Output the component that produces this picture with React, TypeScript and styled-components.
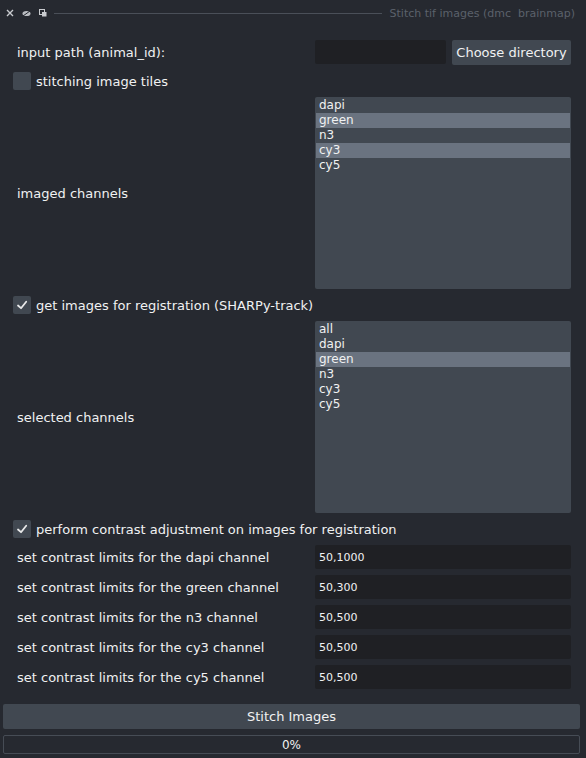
import styled, { createGlobalStyle } from "styled-components";

const GlobalStyle = createGlobalStyle`
  html, body {
    margin: 0;
    padding: 0;
    background: #262930;
  }
  * {
    box-sizing: border-box;
  }
`;

const imagedChannels = ["dapi", "green", "n3", "cy3", "cy5"];
const imagedSelected = ["green", "cy3"];
const selectedChannels = ["all", "dapi", "green", "n3", "cy3", "cy5"];
const selectedPicked = ["green"];

const contrastRows = [
  { channel: "dapi", value: "50,1000" },
  { channel: "green", value: "50,300" },
  { channel: "n3", value: "50,500" },
  { channel: "cy3", value: "50,500" },
  { channel: "cy5", value: "50,500" },
];

const CheckMark = () => (
  <svg width="12" height="12" viewBox="0 0 12 12">
    <polyline points="2,6.5 5,9.2 10.2,2.8" fill="none" stroke="#e8e9ea" strokeWidth="1.8" strokeLinecap="round" strokeLinejoin="round" />
  </svg>
);

const CheckRow = ({ checked, label }: { checked: boolean; label: string }) => (
  <CheckLine>
    <Box>{checked && <CheckMark />}</Box>
    <CheckText>{label}</CheckText>
  </CheckLine>
);

const ListBox = ({ items, selected }: { items: string[]; selected: string[] }) => (
  <List>
    {items.map((item) => (
      <ListItem key={item} $selected={selected.includes(item)}>
        {item}
      </ListItem>
    ))}
  </List>
);

const App = () => {
  return (
    <Page>
      <GlobalStyle />
      <TitleBar>
        <TitleIcons>
          <svg width="8" height="8" viewBox="0 0 8 8">
            <path d="M1 1 L7 7 M7 1 L1 7" stroke="#c9cbcf" strokeWidth="1.4" />
          </svg>
          <svg width="9" height="7" viewBox="0 0 9 7">
            <ellipse cx="4.5" cy="3.5" rx="4" ry="2.6" fill="#b9bcc1" />
            <path d="M1 6 L8 1" stroke="#262930" strokeWidth="1" />
          </svg>
          <svg width="8" height="8" viewBox="0 0 8 8">
            <rect x="0.5" y="0.5" width="5" height="5" fill="none" stroke="#c9cbcf" strokeWidth="1" />
            <rect x="3" y="3" width="4.5" height="4.5" fill="#c9cbcf" />
          </svg>
        </TitleIcons>
        <TitleRule />
        <TitleText>Stitch tif images (dmc&nbsp; brainmap)</TitleText>
      </TitleBar>

      <Body>
        <Form>
          <FormRow>
            <Label>input path (animal_id):</Label>
            <PathGroup>
              <PathInput />
              <ToolButton>Choose directory</ToolButton>
            </PathGroup>
          </FormRow>

          <CheckRow checked={false} label="stitching image tiles" />

          <FormRow>
            <Label>imaged channels</Label>
            <ListBox items={imagedChannels} selected={imagedSelected} />
          </FormRow>

          <CheckRow checked label="get images for registration (SHARPy-track)" />

          <FormRow>
            <Label>selected channels</Label>
            <ListBox items={selectedChannels} selected={selectedPicked} />
          </FormRow>

          <CheckRow checked label="perform contrast adjustment on images for registration" />

          {contrastRows.map((row) => (
            <FormRow key={row.channel}>
              <Label>set contrast limits for the {row.channel} channel</Label>
              <ValueInput>{row.value}</ValueInput>
            </FormRow>
          ))}
        </Form>

        <Footer>
          <WideButton>Stitch Images</WideButton>
          <Progress>0%</Progress>
        </Footer>
      </Body>
    </Page>
  );
};

export default App;

// Styled Components
const Page = styled.div`
  width: 586px;
  height: 758px;
  background: #262930;
  color: #f0f1f2;
  font-family: "DejaVu Sans", sans-serif;
  font-size: 13px;
  overflow: hidden;
`;

const TitleBar = styled.div`
  height: 26px;
  display: flex;
  align-items: center;
  padding: 0 11px 0 5px;
`;

const TitleIcons = styled.div`
  display: flex;
  align-items: center;
  gap: 8px;
  padding-left: 1px;

  svg {
    display: block;
  }
`;

const TitleRule = styled.div`
  flex: 1;
  height: 1px;
  background: #4a4f58;
  margin: 0 8px 0 7px;
`;

const TitleText = styled.div`
  font-size: 11px;
  color: #5b616b;
  white-space: nowrap;
`;

const Body = styled.div`
  padding: 14px 6px 0 3px;
`;

const Form = styled.div`
  display: flex;
  flex-direction: column;
  gap: 6px;
  padding: 0 9px 0 10px;
`;

const FormRow = styled.div`
  display: grid;
  grid-template-columns: 302px 256px;
  align-items: center;
`;

const Label = styled.div`
  padding-left: 4px;
  white-space: nowrap;
`;

const PathGroup = styled.div`
  display: flex;
  align-items: flex-start;
  gap: 6px;
`;

const PathInput = styled.div`
  width: 131px;
  height: 24px;
  background: #1f2024;
  border-radius: 2px;
`;

const ToolButton = styled.div`
  width: 119px;
  height: 25px;
  background: #414851;
  border-radius: 2px;
  display: flex;
  align-items: center;
  justify-content: center;
`;

const CheckLine = styled.div`
  height: 20px;
  display: flex;
  align-items: center;
  gap: 5px;
`;

const Box = styled.div`
  width: 18px;
  height: 18px;
  background: #414851;
  border-radius: 2px;
  display: flex;
  align-items: center;
  justify-content: center;
`;

const CheckText = styled.div`
  white-space: nowrap;
`;

const List = styled.div`
  height: 192px;
  background: #414851;
  border-radius: 2px;
  padding: 1px;
`;

const ListItem = styled.div<{ $selected: boolean }>`
  height: 15px;
  line-height: 15px;
  font-size: 12px;
  padding-left: 3px;
  background: ${(p) => (p.$selected ? "#6a7380" : "transparent")};
`;

const ValueInput = styled.div`
  height: 24px;
  background: #1f2024;
  border-radius: 2px;
  font-size: 11px;
  display: flex;
  align-items: center;
  padding-left: 4px;
`;

const Footer = styled.div`
  display: flex;
  flex-direction: column;
  gap: 6px;
  margin-top: 15px;
`;

const WideButton = styled.div`
  height: 25px;
  background: #414851;
  border-radius: 2px;
  display: flex;
  align-items: center;
  justify-content: center;
`;

const Progress = styled.div`
  height: 19px;
  border: 1px solid #464c55;
  border-radius: 2px;
  font-size: 12px;
  display: flex;
  align-items: center;
  justify-content: center;
`;
